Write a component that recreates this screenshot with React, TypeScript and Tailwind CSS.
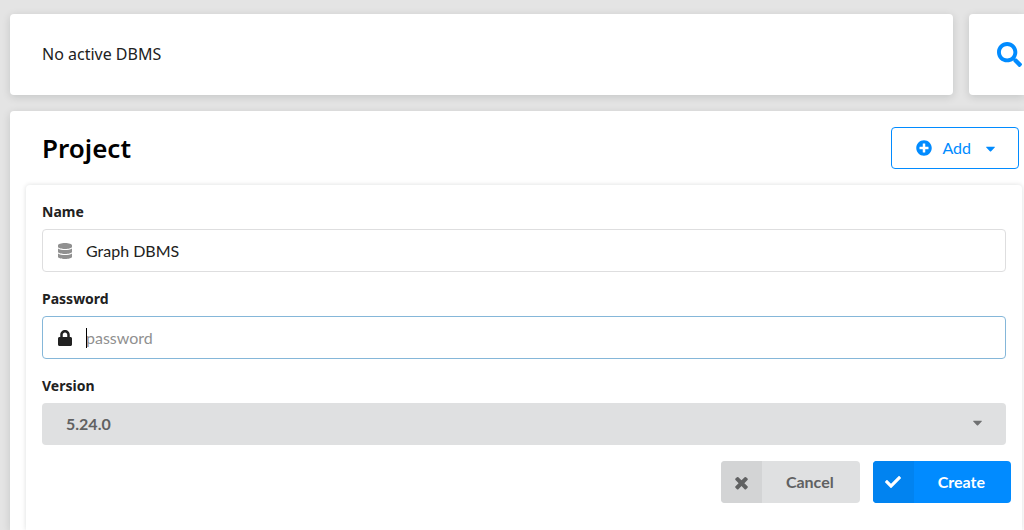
import { useState } from "react";
import { FaCaretDown, FaCheck, FaDatabase, FaLock, FaPlusCircle, FaSearch } from "react-icons/fa";

const VERSIONS = ["5.24.0"];

const CARD = "bg-white shadow-[0_2px_8px_rgba(0,20,20,0.14)]";
const LABEL = "block text-sm leading-5 font-bold text-[#212121] font-['Noto_Sans',sans-serif]";

function CrossIcon() {
  return (
    <svg width="19" height="19" viewBox="0 0 1792 1792" fill="currentColor" aria-hidden="true">
      <path d="M1490 1322q0 40-28 68l-136 136q-28 28-68 28t-68-28l-294-294-294 294q-28 28-68 28t-68-28l-136-136q-28-28-28-68t28-68l294-294-294-294q-28-28-28-68t28-68l136-136q28-28 68-28t68 28l294 294 294-294q28-28 68-28t68 28l136 136q28 28 28 68t-28 68l-294 294 294 294q28 28 28 68z" />
    </svg>
  );
}

export default function App() {
  const [name, setName] = useState("Graph DBMS");
  const [password, setPassword] = useState("");

  return (
    <div className="flex h-screen flex-col gap-4 overflow-hidden bg-[#e4e4e4] pt-3.5 pl-2.5 font-[Lato,sans-serif] text-black">
      {/* Top bar */}
      <div className="flex shrink-0 gap-4">
        <div className={`${CARD} flex flex-1 items-center rounded px-8 py-7`}>
          <p className="font-['Noto_Sans',sans-serif] text-base leading-[25px] text-[#212121]">
            No active DBMS
          </p>
        </div>
        <button
          type="button"
          aria-label="Search"
          className={`${CARD} flex w-[55px] items-center rounded-l pl-7 text-[#018bff]`}
        >
          <FaSearch size={25} className="shrink-0" />
        </button>
      </div>

      {/* Project */}
      <main className={`${CARD} flex grow flex-col rounded-tl pt-4 pl-4`}>
        <header className="flex items-center justify-between pr-[5px] pb-4 pl-4">
          <h1 className="font-['Noto_Sans',sans-serif] text-[26px] leading-10 font-semibold">Project</h1>
          <button
            type="button"
            className="flex h-[42px] items-center rounded border border-[#018bff] pr-5 pl-6 text-base text-[#018bff]"
          >
            <FaPlusCircle size={16} />
            <span className="pr-3 pl-2.5">Add</span>
            <FaCaretDown size={15} />
          </button>
        </header>

        <form
          onSubmit={(e) => e.preventDefault()}
          className="mr-0.5 grow rounded-t bg-white px-4 pt-[17px] shadow-[0_0_5px_rgba(0,20,20,0.14)]"
        >
          <div className="mb-[17px]">
            <label htmlFor="name" className={LABEL}>
              Name
            </label>
            <div className="mt-[7px] flex h-[43px] items-center rounded border border-[#dededf] pl-3.5">
              <FaDatabase size={16} className="shrink-0 text-[#909090]" />
              <input
                id="name"
                value={name}
                onChange={(e) => setName(e.target.value)}
                className="w-full bg-transparent px-[13px] text-base text-[#212121] outline-none"
              />
            </div>
          </div>

          <div className="mb-[17px]">
            <label htmlFor="password" className={LABEL}>
              Password
            </label>
            <div className="mt-[7px] flex h-[43px] items-center rounded border border-[#85b7d9] pl-3.5">
              <FaLock size={16} className="shrink-0 text-[#212121]" />
              <div className="relative w-full">
                <input
                  id="password"
                  type="password"
                  placeholder="password"
                  value={password}
                  onChange={(e) => setPassword(e.target.value)}
                  className="w-full bg-transparent px-[13px] text-base text-[#212121] outline-none placeholder:text-[#909090]"
                />
                {!password && <span className="absolute top-0.5 left-[13px] h-5 w-px bg-black" />}
              </div>
            </div>
          </div>

          <div>
            <label htmlFor="version" className={LABEL}>
              Version
            </label>
            <div className="relative mt-[7px]">
              <select
                id="version"
                className="h-[42px] w-full appearance-none rounded bg-[#dfe0e1] px-6 text-base font-bold text-[#606162]"
              >
                {VERSIONS.map((v) => (
                  <option key={v}>{v}</option>
                ))}
              </select>
              <FaCaretDown
                size={15}
                className="pointer-events-none absolute top-3 right-[21px] text-[#707172]"
              />
            </div>
          </div>

          {/* Actions */}
          <div className="-mr-[5px] mt-4 flex justify-end gap-[13px]">
            <button
              type="button"
              className="flex h-[42px] items-center overflow-hidden rounded bg-[#dfe0e1] text-base font-bold text-[#606162]"
            >
              <span className="flex h-full w-[41px] items-center justify-center bg-[#d3d4d5]">
                <CrossIcon />
              </span>
              <span className="pr-[26px] pl-6">Cancel</span>
            </button>
            <button
              type="submit"
              className="flex h-[42px] items-center overflow-hidden rounded bg-[#018bff] text-base font-bold text-white"
            >
              <span className="flex h-full w-[41px] items-center justify-center bg-[#0183f0]">
                <FaCheck size={16} />
              </span>
              <span className="pr-[26px] pl-6">Create</span>
            </button>
          </div>
        </form>
      </main>
    </div>
  );
}
